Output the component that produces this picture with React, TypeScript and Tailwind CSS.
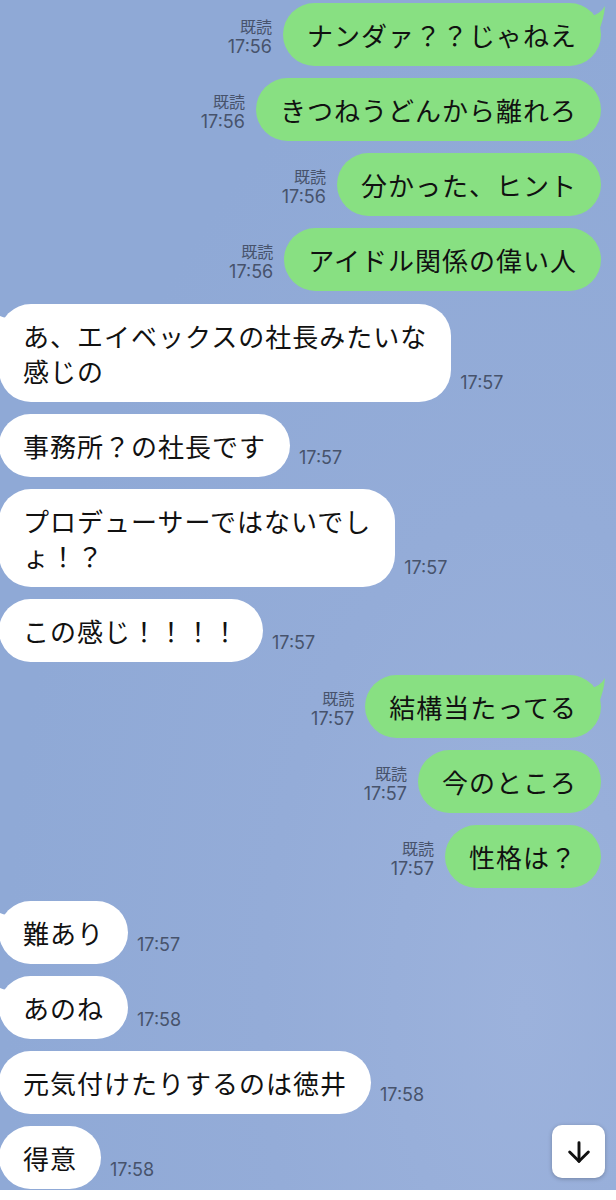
import React from "react";
import { ArrowDown } from "lucide-react";

type Msg = {
  side: "me" | "them";
  lines: string[];
  time: string;
  first?: boolean;
  gapTop?: boolean;
};

const msgs: Msg[] = [
  { side: "me", lines: ["ナンダァ？？じゃねえ"], time: "17:56", first: true },
  { side: "me", lines: ["きつねうどんから離れろ"], time: "17:56" },
  { side: "me", lines: ["分かった、ヒント"], time: "17:56" },
  { side: "me", lines: ["アイドル関係の偉い人"], time: "17:56" },
  { side: "them", lines: ["あ、エイベックスの社長みたいな", "感じの"], time: "17:57", first: true, gapTop: true },
  { side: "them", lines: ["事務所？の社長です"], time: "17:57" },
  { side: "them", lines: ["プロデューサーではないでし", "ょ！？"], time: "17:57" },
  { side: "them", lines: ["この感じ！！！！"], time: "17:57" },
  { side: "me", lines: ["結構当たってる"], time: "17:57", first: true, gapTop: true },
  { side: "me", lines: ["今のところ"], time: "17:57" },
  { side: "me", lines: ["性格は？"], time: "17:57" },
  { side: "them", lines: ["難あり"], time: "17:57", first: true, gapTop: true },
  { side: "them", lines: ["あのね"], time: "17:58", first: true },
  { side: "them", lines: ["元気付けたりするのは徳井"], time: "17:58" },
  { side: "them", lines: ["得意"], time: "17:58" },
];

const jp = { fontFamily: '"Noto Sans CJK JP", "Noto Sans", sans-serif' };
const num = { fontFamily: 'Inter, "Liberation Sans", "Noto Sans CJK JP", sans-serif' };

function Bubble({ m }: { m: Msg }) {
  const me = m.side === "me";
  return (
    <div
      className={`relative whitespace-nowrap rounded-[32px] px-[24px] py-[14px] text-[26px] leading-[35px] tracking-[1px] text-[#111111] ${
        me ? "bg-[#88e082]" : "bg-white"
      }`}
      style={jp}
    >
      {m.first && me && (
        <svg className="absolute right-[-9px] top-0" width="22" height="32" viewBox="0 0 22 32">
          <path d="M0 14 Q12 12 17 3 Q16 16 10 30 L0 30 Z" fill="#88e082" />
        </svg>
      )}
      {m.first && !me && (
        <svg className="absolute left-[-14px] top-0" width="22" height="32" viewBox="0 0 22 32">
          <path d="M22 14 Q10 12 5 3 Q6 16 12 30 L22 30 Z" fill="#ffffff" />
        </svg>
      )}
      <span className="relative">
        {m.lines.map((l, i) => (
          <React.Fragment key={i}>
            {i > 0 && <br />}
            {l}
          </React.Fragment>
        ))}
      </span>
    </div>
  );
}

function Row({ m }: { m: Msg }) {
  const me = m.side === "me";
  if (me) {
    return (
      <div className={`flex items-end justify-end pr-[15px] ${m.gapTop ? "mt-[1px]" : ""}`}>
        <div className="mr-[11px] mb-[9px] flex flex-col items-end text-[#47536c]">
          <span className="text-[16px] leading-[20px]" style={jp}>既読</span>
          <span className="text-[18px] leading-[21px]" style={num}>{m.time}</span>
        </div>
        <Bubble m={m} />
      </div>
    );
  }
  return (
    <div className={`flex items-end justify-start ml-[-1px] ${m.gapTop ? "mt-[1px]" : ""}`}>
      <Bubble m={m} />
      <span className="ml-[9px] mb-[9px] text-[18px] leading-[21px] text-[#47536c]" style={num}>
        {m.time}
      </span>
    </div>
  );
}

export default function App() {
  return (
    <div className="w-[616px] h-[1200px] bg-white overflow-hidden">
      <div className="relative h-[1190px] overflow-hidden bg-[radial-gradient(ellipse_at_85%_85%,#9cb2dc_0%,#94acd8_35%,#8fa9d6_70%)]">
        <div className="flex flex-col gap-3 pt-[3px]">
          {msgs.map((m, i) => (
            <Row key={i} m={m} />
          ))}
        </div>
        <div className="absolute right-[11px] bottom-[12px] flex h-[53px] w-[53px] items-center justify-center rounded-[10px] bg-white shadow-[0_1px_4px_rgba(0,0,0,0.25)]">
          <ArrowDown size={32} strokeWidth={2.2} color="#111111" />
        </div>
      </div>
    </div>
  );
}
